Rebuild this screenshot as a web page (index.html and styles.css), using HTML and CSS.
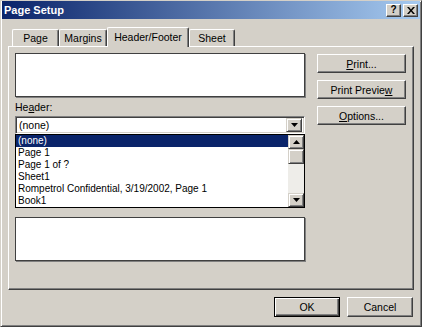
FILE: index.html
```html
<!DOCTYPE html>
<html lang="en">
<head>
  <meta charset="UTF-8">
  <title>Page Setup</title>
  <link rel="stylesheet" href="styles.css">
</head>
<body>
  <div class="window">
    <div class="titlebar">
      <span class="title">Page Setup</span>
      <div class="caption-btns">
        <span class="cap-btn help">?</span>
        <span class="cap-btn close">
          <svg width="8" height="7" viewBox="0 0 8 7"><path d="M0 0h2l2 2.5L6 0h2L5 3.5 8 7H6L4 4.5 2 7H0l3-3.5z" fill="#000"/></svg>
        </span>
      </div>
    </div>

    <div class="tabs">
      <div class="tab tab-page">Page</div>
      <div class="tab tab-margins">Margins</div>
      <div class="tab tab-hf active">Header/Footer</div>
      <div class="tab tab-sheet">Sheet</div>
    </div>

    <div class="panel">
      <div class="left">
        <div class="preview"></div>
        <div class="label">He<u>a</u>der:</div>
        <div class="combo-wrap">
          <div class="combo">
            <span class="combo-text">(none)</span>
            <span class="drop-btn"><svg width="7" height="4" viewBox="0 0 7 4"><path d="M0 0h7L3.5 4z" fill="#000"/></svg></span>
          </div>
          <div class="list">
            <div class="items">
              <div class="item selected">(none)</div>
              <div class="item">Page 1</div>
              <div class="item">Page 1 of ?</div>
              <div class="item">Sheet1</div>
              <div class="item">Rompetrol Confidential, 3/19/2002, Page 1</div>
              <div class="item">Book1</div>
            </div>
            <div class="scrollbar">
              <span class="sb-btn"><svg width="7" height="4" viewBox="0 0 7 4"><path d="M3.5 0L7 4H0z" fill="#000"/></svg></span>
              <span class="sb-thumb"></span>
              <span class="sb-track"></span>
              <span class="sb-btn"><svg width="7" height="4" viewBox="0 0 7 4"><path d="M0 0h7L3.5 4z" fill="#000"/></svg></span>
            </div>
          </div>
        </div>
        <div class="spacer"></div>
        <div class="preview"></div>
      </div>
      <div class="right">
        <div class="btn"><u>P</u>rint...</div>
        <div class="btn">Print Previe<u>w</u></div>
        <div class="btn"><u>O</u>ptions...</div>
      </div>
    </div>

    <div class="dialog-btns">
      <div class="btn default">OK</div>
      <div class="btn">Cancel</div>
    </div>
  </div>
</body>
</html>
```

FILE: styles.css
```css
body { margin: 0; font-family: "Liberation Sans", Arial, sans-serif; font-size: 10.5px; color: #000; background: #d4d0c8; }
u { text-decoration: underline; text-underline-offset: 1px; }

.window { box-sizing: border-box; width: 422px; height: 327px; background: #d4d0c8; border: 1px solid; border-color: #d4d0c8 #404040 #404040 #d4d0c8; box-shadow: inset 1px 1px #fff, inset -1px -1px #808080; padding: 0 1px 1px 1px; }

.titlebar { height: 18px; display: flex; align-items: center; justify-content: space-between; padding: 0 2px 0 2px; background: linear-gradient(to right, #0a246a, #a6caf0); }
.title { color: #fff; font-weight: bold; font-size: 11px; }
.caption-btns { display: flex; gap: 2px; }
.cap-btn { box-sizing: border-box; width: 15px; height: 13px; background: #d4d0c8; border: 1px solid; border-color: #fff #404040 #404040 #fff; box-shadow: inset -1px -1px #808080; display: flex; align-items: center; justify-content: center; }
.cap-btn.help { font-weight: bold; font-size: 10px; line-height: 1; }

.tabs { display: flex; align-items: flex-end; height: 19px; margin: 8px 0 0 8px; position: relative; }
.tab { box-sizing: border-box; height: 17px; padding-top: 2px; text-align: center; background: #d4d0c8; border: 1px solid; border-bottom: none; border-color: #fff #404040 #fff #fff; border-radius: 2px 2px 0 0; box-shadow: inset -1px 0 #808080; position: relative; }
.tab-page { width: 47px; margin-left: 2px; }
.tab-margins { width: 48px; }
.tab-hf { width: 82px; }
.tab-sheet { width: 46px; }
.tab.active { height: 20px; margin-bottom: -1px; padding-top: 3px; z-index: 1; }

.panel { box-sizing: border-box; width: 406px; height: 244px; margin-left: 6px; display: flex; padding: 6px; border: 1px solid; border-color: #fff #404040 #404040 #fff; box-shadow: inset -1px -1px #808080; }
.left { width: 290px; display: flex; flex-direction: column; }
.right { margin-left: 12px; padding-top: 1px; display: flex; flex-direction: column; gap: 7px; }

.preview { box-sizing: border-box; height: 44px; background: #fff; border: 1px solid #404040; box-shadow: 1px 1px #808080; }
.label { margin-top: 4px; height: 12px; line-height: 12px; }
.combo-wrap { position: relative; margin-top: 3px; }
.combo { box-sizing: border-box; height: 18px; background: #fff; display: flex; align-items: center; justify-content: space-between; border: 1px solid; border-color: #808080 #fff #fff #808080; box-shadow: inset 1px 1px #404040, inset -1px -1px #d4d0c8; padding: 2px; }
.combo-text { padding-left: 1px; }
.drop-btn { box-sizing: border-box; width: 16px; height: 14px; background: #d4d0c8; border: 1px solid; border-color: #d4d0c8 #404040 #404040 #d4d0c8; box-shadow: inset 1px 1px #fff, inset -1px -1px #808080; display: flex; align-items: center; justify-content: center; }

.list { position: absolute; top: 100%; left: 0; right: 0; box-sizing: border-box; height: 74px; background: #fff; border: 1px solid #000; display: flex; z-index: 2; font-size: 10px; }
.items { flex: 1; }
.item { height: 12px; line-height: 12px; padding-left: 2px; white-space: nowrap; }
.item.selected { background: #0a246a; color: #fff; }
.scrollbar { width: 16px; display: flex; flex-direction: column; background: #eeede9; }
.sb-btn, .sb-thumb { box-sizing: border-box; width: 16px; height: 14px; background: #d4d0c8; border: 1px solid; border-color: #d4d0c8 #404040 #404040 #d4d0c8; box-shadow: inset 1px 1px #fff, inset -1px -1px #808080; display: flex; align-items: center; justify-content: center; }
.sb-thumb { height: 15px; }
.sb-track { flex: 1; }
.spacer { height: 83px; }

.btn { box-sizing: border-box; width: 89px; height: 19px; display: flex; align-items: center; justify-content: center; background: #d4d0c8; border: 1px solid; border-color: #fff #404040 #404040 #fff; box-shadow: inset -1px -1px #808080; }

.dialog-btns { display: flex; justify-content: flex-end; gap: 7px; margin: 7px 7px 0 0; }
.dialog-btns .btn { width: 66px; height: 20px; }
.dialog-btns .btn.default { border: 1px solid #000; box-shadow: inset 1px 1px #fff, inset -1px -1px #404040, inset -2px -2px #808080; }
```
